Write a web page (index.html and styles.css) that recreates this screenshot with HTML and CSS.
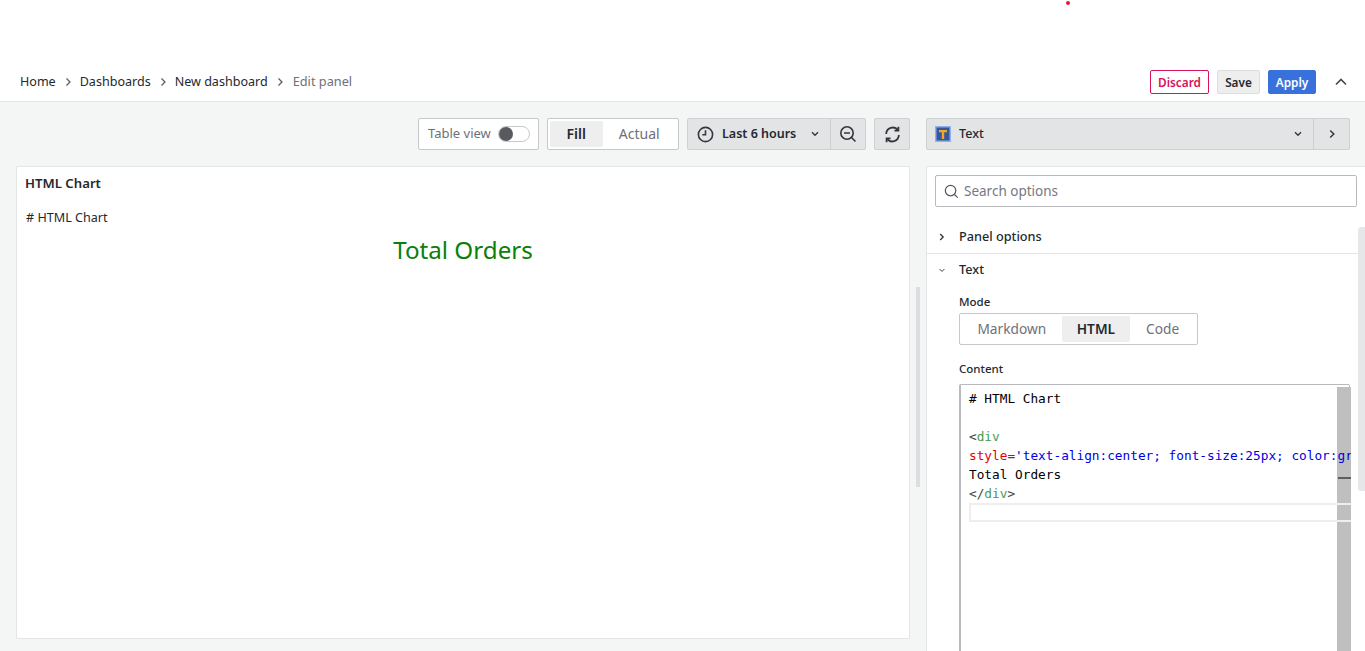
FILE: index.html
```html
<!DOCTYPE html>
<html lang="en">
<head>
<meta charset="utf-8">
<title>Edit panel</title>
<link rel="stylesheet" href="styles.css">
</head>
<body>
<span class="red-dot"></span>
<header class="topbar">
  <nav class="crumbs">
    <a class="crumb">Home</a>
    <svg class="crumb-sep" viewBox="0 0 8 10"><path d="M2.5 1.5 6 5 2.5 8.5"/></svg>
    <a class="crumb">Dashboards</a>
    <svg class="crumb-sep" viewBox="0 0 8 10"><path d="M2.5 1.5 6 5 2.5 8.5"/></svg>
    <a class="crumb">New dashboard</a>
    <svg class="crumb-sep" viewBox="0 0 8 10"><path d="M2.5 1.5 6 5 2.5 8.5"/></svg>
    <span class="crumb crumb-current">Edit panel</span>
  </nav>
  <div class="top-actions">
    <button class="btn btn-discard">Discard</button>
    <button class="btn btn-save">Save</button>
    <button class="btn btn-apply">Apply</button>
    <svg class="collapse" viewBox="0 0 14 10"><path d="M2 7.5 7 2.5 12 7.5"/></svg>
  </div>
</header>
<main class="workspace">
  <section class="left">
    <div class="toolbar">
      <div class="table-view">
        <span class="lift">Table view</span>
        <span class="switch"><span class="knob"></span></span>
      </div>
      <div class="radio fill-radio">
        <span class="radio-opt active">Fill</span>
        <span class="radio-opt">Actual</span>
      </div>
      <div class="timegroup">
        <div class="time-range">
          <svg class="ico-clock" viewBox="0 0 16 16"><circle cx="8" cy="8" r="6.7"/><path d="M8 4v4.3H5"/></svg>
          <span class="time-label lift">Last 6 hours</span>
          <svg class="ico-chev" viewBox="0 0 10 8"><path d="M2 2.2 5 5.2 8 2.2"/></svg>
        </div>
        <div class="zoom-out">
          <svg class="ico-zoom" viewBox="0 0 18 18"><circle cx="8" cy="8" r="6.2"/><path d="M5 8h6M12.5 12.5 16.5 16.5"/></svg>
        </div>
      </div>
      <div class="refresh">
        <svg class="ico-refresh" viewBox="0 0 18 18"><path d="M3 8.5A6.2 6.2 0 0 1 14.2 5M15 9.5A6.2 6.2 0 0 1 3.8 13M14.6 1.6v3.8h-3.8M3.4 16.4v-3.8h3.8"/></svg>
      </div>
    </div>
    <article class="panel">
      <h2 class="panel-title">HTML Chart</h2>
      <p class="panel-md"># HTML Chart</p>
      <div class="panel-html">Total Orders</div>
    </article>
  </section>
  <div class="splitter"></div>
  <aside class="right">
    <div class="viz-row">
      <div class="viz-picker">
        <svg class="viz-icon" viewBox="0 0 16 16"><rect width="16" height="16" fill="#8fb1e6"/><rect x="1.5" y="1.5" width="13" height="13" fill="#33589f"/><path d="M4 4h8v2.2H9.2V13H6.8V6.2H4z" fill="#f5a623"/></svg>
        <span class="viz-name lift">Text</span>
        <svg class="ico-chev" viewBox="0 0 10 8"><path d="M2 2.2 5 5.2 8 2.2"/></svg>
      </div>
      <div class="viz-toggle">
        <svg class="ico-right" viewBox="0 0 8 10"><path d="M2.2 1.5 5.8 5 2.2 8.5"/></svg>
      </div>
    </div>
    <div class="options">
      <div class="search">
        <svg class="ico-search" viewBox="0 0 16 16"><circle cx="7" cy="7" r="5.6"/><path d="M11.2 11.2 14.6 14.6"/></svg>
        <span>Search options</span>
      </div>
      <div class="group-head group-closed">
        <svg class="ico-right small" viewBox="0 0 8 10"><path d="M2.2 2 5.2 5 2.2 8"/></svg>
        <span class="lift">Panel options</span>
      </div>
      <div class="group-head">
        <svg class="ico-chev small" viewBox="0 0 10 8"><path d="M2 2.2 5 5.2 8 2.2"/></svg>
        <span class="lift">Text</span>
      </div>
      <div class="group-body">
        <label class="field-label">Mode</label>
        <div class="radio mode-radio">
          <span class="radio-opt opt-md">Markdown</span>
          <span class="radio-opt opt-html active">HTML</span>
          <span class="radio-opt opt-code">Code</span>
        </div>
        <label class="field-label content-label">Content</label>
        <div class="editor">
          <div class="editor-view">
            <div class="editor-scroll"><span class="scroll-mark"></span></div>
            <div class="current-line"></div>
            <pre class="code"><span># HTML Chart</span>
&nbsp;
<span class="c-tag-b">&lt;</span><span class="c-tag">div</span>
<span class="c-attr">style</span><span class="c-tag-b">=</span><span class="c-str">'text-align:center; font-size:25px; color:gr</span>
<span>Total Orders</span>
<span class="c-tag-b">&lt;/</span><span class="c-tag">div</span><span class="c-tag-b">&gt;</span></pre>
          </div>
        </div>
      </div>
    </div>
    <div class="pane-scroll"></div>
  </aside>
</main>
</body>
</html>
```
FILE: styles.css
```css
* { box-sizing: border-box; }
html, body { margin: 0; height: 651px; overflow: hidden; }
body {
  position: relative;
  background: #f4f5f5;
  font-family: "Noto Sans", sans-serif;
  font-size: 13px;
  color: #24292e;
}
.lift { padding-bottom: 2px; }
.red-dot {
  position: absolute;
  left: 1066px;
  top: 1px;
  width: 4px;
  height: 4px;
  border-radius: 50%;
  background: #e8173c;
}
.topbar {
  height: 102px;
  background: #fff;
  border-bottom: 1px solid #e4e5e6;
  padding: 70px 17px 0 20px;
  display: flex;
  justify-content: space-between;
  align-items: flex-start;
}
.crumbs { display: flex; align-items: center; height: 22px; }
.crumb { font-size: 12.55px; color: #24292e; }
.crumb-current { margin-left: 1px; font-size: 12.75px; color: #6e7178; }
.crumb-sep {
  width: 8px;
  height: 10px;
  margin: 2px 8px 0;
  fill: none;
  stroke: #5a5d63;
  stroke-width: 1.3;
}
.top-actions { display: flex; align-items: center; height: 24px; }
.btn {
  height: 24px;
  padding: 0;
  border-radius: 2px;
  font: 600 11.8px "Noto Sans", sans-serif;
}
.btn-discard { width: 59px; background: #fff; border: 1px solid #d9115a; color: #d9115a; }
.btn-save { width: 43px; margin-left: 8px; background: #eeeeef; border: 1px solid #dcdde0; color: #24292e; }
.btn-apply { width: 48px; margin-left: 8px; background: #3871dc; border: 1px solid #3871dc; color: #fff; }
.collapse {
  width: 14px;
  height: 10px;
  margin-left: 18px;
  fill: none;
  stroke: #44474c;
  stroke-width: 1.6;
}
.workspace {
  display: flex;
  height: 549px;
  padding: 16px 0 0 16px;
}
.left { width: 894px; flex: none; }
.toolbar {
  display: flex;
  justify-content: flex-end;
  align-items: stretch;
  height: 32px;
  gap: 8px;
  margin-bottom: 16px;
}
.table-view {
  width: 121px;
  display: flex;
  align-items: center;
  justify-content: space-between;
  padding: 0 8px 0 9px;
  background: #fff;
  border: 1px solid #c7c8ca;
  border-radius: 2px;
  color: #6e7178;
}
.switch {
  width: 32px;
  height: 16px;
  border: 1px solid #c7c8ca;
  border-radius: 8px;
  position: relative;
  background: #fff;
}
.knob {
  position: absolute;
  left: 0;
  top: 0;
  width: 14px;
  height: 14px;
  border-radius: 50%;
  background: #585a60;
}
.radio {
  display: flex;
  background: #fff;
  border: 1px solid #c7c8ca;
  border-radius: 2px;
  padding: 2px;
}
.radio-opt {
  display: flex;
  align-items: center;
  justify-content: center;
  border-radius: 2px;
  padding-bottom: 2px;
  font-size: 14px;
  color: #6e7178;
}
.radio-opt.active { background: #eeeeef; color: #24292e; font-weight: 600; }
.fill-radio { width: 132px; }
.fill-radio .radio-opt { width: 53px; }
.fill-radio .radio-opt + .radio-opt { width: 74px; }
.timegroup {
  display: flex;
  background: #e3e4e6;
  border: 1px solid #cfd0d3;
  border-radius: 2px;
}
.time-range {
  width: 143px;
  display: flex;
  align-items: center;
  padding: 0 10px 0 9px;
  border-right: 1px solid #cfd0d3;
}
.ico-clock {
  width: 17px;
  height: 17px;
  fill: none;
  stroke: #34373c;
  stroke-width: 1.5;
  flex: none;
}
.time-label { margin-left: 8px; font-size: 12.5px; font-weight: 600; flex: 1; white-space: nowrap; }
.ico-chev {
  width: 10px;
  height: 8px;
  fill: none;
  stroke: #34373c;
  stroke-width: 1.4;
  flex: none;
}
.zoom-out {
  width: 34px;
  display: flex;
  align-items: center;
  justify-content: center;
}
.ico-zoom {
  width: 18px;
  height: 18px;
  fill: none;
  stroke: #34373c;
  stroke-width: 1.6;
}
.refresh {
  width: 36px;
  display: flex;
  align-items: center;
  justify-content: center;
  background: #e3e4e6;
  border: 1px solid #cfd0d3;
  border-radius: 2px;
}
.ico-refresh {
  width: 19px;
  height: 19px;
  fill: none;
  stroke: #34373c;
  stroke-width: 1.7;
}
.panel {
  height: 473px;
  background: #fff;
  border: 1px solid #e4e5e6;
  border-radius: 1px;
  padding: 0 8px;
}
.panel-title {
  margin: 0;
  height: 33px;
  line-height: 33px;
  font-size: 13.2px;
  font-weight: 600;
}
.panel-md { margin: 9px 0 0 1px; font-size: 12.6px; line-height: 18px; }
.panel-html {
  text-align: center;
  font-size: 24.2px;
  line-height: 32px;
  color: #0a800a;
  padding-top: 7px;
}
.splitter {
  flex: none;
  width: 16px;
  position: relative;
}
.splitter::after {
  content: "";
  position: absolute;
  left: 6px;
  top: 169px;
  width: 4px;
  height: 200px;
  background: #dcdde0;
}
.right { flex: 1; min-width: 0; position: relative; }
.viz-row {
  display: flex;
  width: 424px;
  height: 32px;
  margin-bottom: 16px;
  background: #e3e4e6;
  border: 1px solid #cfd0d3;
  border-radius: 2px;
}
.viz-picker {
  flex: 1;
  display: flex;
  align-items: center;
  padding: 0 10px 0 8px;
  border-right: 1px solid #cfd0d3;
}
.viz-icon { width: 16px; height: 16px; flex: none; }
.viz-name { margin-left: 8px; flex: 1; font-size: 12.6px; font-weight: 500; }
.viz-toggle {
  width: 35px;
  display: flex;
  align-items: center;
  justify-content: center;
}
.ico-right {
  width: 8px;
  height: 10px;
  fill: none;
  stroke: #34373c;
  stroke-width: 1.5;
}
.options {
  height: 485px;
  overflow: hidden;
  background: #fff;
  border-left: 1px solid #e4e5e6;
  border-top: 1px solid #e4e5e6;
  padding-top: 8px;
}
.search {
  display: flex;
  align-items: center;
  width: 422px;
  height: 32px;
  margin-left: 8px;
  padding-left: 8px;
  background: #fff;
  border: 1px solid #b9babd;
  border-radius: 2px;
  color: #767980;
  font-size: 13.5px;
}
.ico-search {
  width: 15px;
  height: 15px;
  margin-right: 5px;
  fill: none;
  stroke: #55585d;
  stroke-width: 1.3;
}
.group-head {
  display: flex;
  align-items: center;
  height: 32px;
  padding-left: 11px;
  font-size: 12.7px;
  font-weight: 500;
}
.group-head span { margin-left: 13px; }
.group-closed { margin-top: 14px; border-bottom: 1px solid #e4e5e6; height: 33px; }
.ico-right.small { width: 8px; height: 10px; stroke-width: 1.3; }
.ico-chev.small { width: 8px; height: 7px; stroke-width: 1.2; margin-right: 0; }
.group-body { padding: 8px 0 0 32px; }
.field-label {
  display: block;
  font-size: 11.5px;
  font-weight: 500;
  line-height: 16px;
}
.mode-radio { width: 239px; height: 32px; margin-top: 3px; }
.mode-radio .radio-opt { font-size: 13.7px; }
.opt-md { width: 100px; }
.opt-html { width: 69px; }
.opt-code { width: 65px; }
.content-label { margin-top: 16px; }
.editor {
  position: relative;
  width: 391px;
  height: 400px;
  margin-top: 7px;
  background: #fff;
  border: 1px solid #b9babd;
  border-left-width: 2px;
  border-radius: 2px 2px 0 0;
}
.editor-view {
  position: absolute;
  inset: 0 -2px 0 0;
  overflow: hidden;
}
.code {
  position: relative;
  margin: 0;
  padding: 4px 0 0 8px;
  font-family: "DejaVu Sans Mono", monospace;
  font-size: 12.75px;
  line-height: 19px;
  color: #000;
  white-space: pre;
}
.c-tag { color: #4c9a50; }
.c-tag-b { color: #444; }
.c-attr { color: #e60000; }
.c-str { color: #0000e6; }
.current-line {
  position: absolute;
  left: 8px;
  top: 118px;
  right: 0;
  height: 19px;
  border: 2px solid #eeeeee;
  border-right: 0;
}
.editor-scroll {
  position: absolute;
  top: 2px;
  right: 0;
  width: 14px;
  bottom: 0;
  background: #bfbfbf;
}
.scroll-mark {
  position: absolute;
  left: 1px;
  right: 0;
  top: 90px;
  height: 2px;
  background: #5e5e5e;
}
.pane-scroll {
  position: absolute;
  right: 0;
  top: 109px;
  width: 7px;
  height: 264px;
  background: #e6e7e8;
  border-radius: 3px 0 0 3px;
}
```
